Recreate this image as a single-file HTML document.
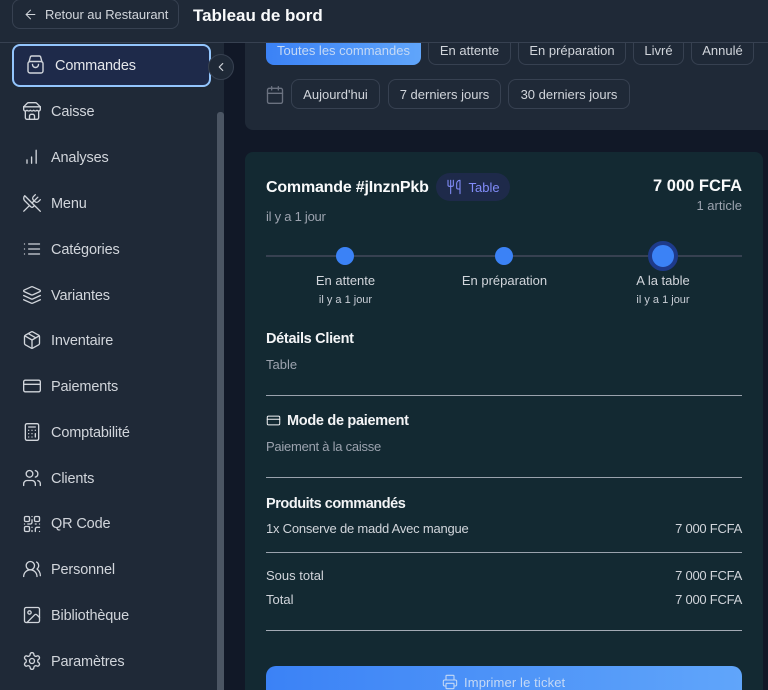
<!DOCTYPE html>
<html lang="fr">
<head>
<meta charset="utf-8">
<title>Tableau de bord</title>
<style>
html,body{margin:0;padding:0;width:768px;height:690px;overflow:hidden;background:#111827;font-family:"Liberation Sans",sans-serif}
#p{position:relative;width:768px;height:690px;overflow:hidden;background:#111827}
.a{position:absolute}
.t{position:absolute;white-space:nowrap;line-height:20px;height:20px}
.c{transform:translateX(-50%)}
.r{transform:translateX(-100%)}
svg.i{position:absolute;fill:none;stroke:currentColor;stroke-width:1.6;stroke-linecap:round;stroke-linejoin:round}
.n{font-size:14.5px;letter-spacing:-.15px;color:#d1d5db;left:51px}
.ic{color:#d1d5db;left:22px;width:20px;height:20px}
.chip{position:absolute;box-sizing:border-box;border:1px solid #374151;border-radius:8px;background:#1f2937;color:#d1d5db;font-size:13px;display:flex;align-items:center;justify-content:center;white-space:nowrap}
.hr{position:absolute;left:266px;width:476px;height:1px;background:#9aa2ad}
.h{font-size:14.5px;font-weight:bold;color:#f3f4f6}
.m{font-size:13px;color:#d1d5db}
.g{font-size:13px;color:#9ca3af}
.p{letter-spacing:-.25px}
</style>
</head>
<body>
<div id="p">
<!-- top filter card -->
<div class="a" style="left:245px;top:30px;width:523px;height:100px;background:#1f2937;border-radius:0 0 0 8px"></div>
<div class="chip" style="left:266px;top:30px;width:155px;height:35px;border:0;background:linear-gradient(90deg,#3b82f6,#60a5fa);color:#c5d9f5;align-items:flex-start"><span style="margin-top:13px;line-height:16px">Toutes les commandes</span></div>
<div class="chip" style="left:428px;top:30px;width:83px;height:35px;align-items:flex-start"><span style="margin-top:11.5px;line-height:16px">En attente</span></div>
<div class="chip" style="left:518px;top:30px;width:108px;height:35px;align-items:flex-start"><span style="margin-top:11.5px;line-height:16px">En préparation</span></div>
<div class="chip" style="left:633px;top:30px;width:51px;height:35px;align-items:flex-start"><span style="margin-top:11.5px;line-height:16px">Livré</span></div>
<div class="chip" style="left:691px;top:30px;width:63px;height:35px;align-items:flex-start"><span style="margin-top:11.5px;line-height:16px">Annulé</span></div>

<svg class="i" viewBox="0 0 24 24" style="left:265px;top:85px;width:20px;height:20px;color:#6b7280"><rect x="3" y="4" width="18" height="18" rx="2"/><path d="M16 2v4M8 2v4M3 10h18"/></svg>
<div class="chip" style="left:291px;top:79px;width:89px;height:30px;padding-top:1px">Aujourd'hui</div>
<div class="chip" style="left:388px;top:79px;width:113px;height:30px;padding-top:1px">7 derniers jours</div>
<div class="chip" style="left:508px;top:79px;width:122px;height:30px;padding-top:1px">30 derniers jours</div>

<!-- order card -->
<div class="a" style="left:245px;top:152px;width:518px;height:560px;background:#132932;border-radius:8px"></div>
<div class="t" style="left:266px;top:178px;font-size:16px;font-weight:bold;color:#f9fafb;letter-spacing:-.2px">Commande #jInznPkb</div>
<div class="a" style="left:436px;top:173px;width:74px;height:28px;border-radius:14px;background:#1e2a4a"></div>
<svg class="i" viewBox="0 0 24 24" style="left:446px;top:179px;width:16px;height:16px;color:#818cf8"><path d="M3 2v7c0 1.1.9 2 2 2h4a2 2 0 0 0 2-2V2"/><path d="M7 2v20"/><path d="M21 15V2a5 5 0 0 0-5 5v6c0 1.1.9 2 2 2h3Zm0 0v7"/></svg>
<div class="t" style="left:468.5px;top:177.5px;font-size:13px;color:#818cf8">Table</div>
<div class="t r" style="left:742px;top:175.5px;font-size:16.5px;font-weight:bold;color:#f9fafb">7 000 FCFA</div>
<div class="t r g" style="left:742px;top:196px">1 article</div>
<div class="t g" style="left:266px;top:207px;letter-spacing:-.25px">il y a 1 jour</div>

<!-- steps -->
<div class="a" style="left:266px;top:255px;width:476px;height:2px;background:#374151"></div>
<div class="a" style="left:336px;top:246.5px;width:18px;height:18px;border-radius:50%;background:#3b82f6"></div>
<div class="a" style="left:495px;top:246.5px;width:18px;height:18px;border-radius:50%;background:#3b82f6"></div>
<div class="a" style="left:648px;top:241px;width:22px;height:22px;border-radius:50%;background:#3b82f6;border:4px solid #1e3a8a"></div>
<div class="t c m" style="left:345.5px;top:270.5px">En attente</div>
<div class="t c" style="left:345.5px;top:290px;font-size:11px;color:#c9ced6">il y a 1 jour</div>
<div class="t c m" style="left:504.5px;top:270.5px">En préparation</div>
<div class="t c m" style="left:663px;top:270.5px">A la table</div>
<div class="t c" style="left:663px;top:290px;font-size:11px;color:#c9ced6">il y a 1 jour</div>

<div class="t h" style="left:266px;top:328.5px;letter-spacing:-.3px">Détails Client</div>
<div class="t g" style="left:266px;top:355px">Table</div>
<div class="hr" style="top:395px"></div>

<svg class="i" viewBox="0 0 24 24" style="left:266px;top:413px;width:15px;height:15px;color:#f3f4f6"><rect x="2" y="5" width="20" height="14" rx="2"/><path d="M2 10h20"/></svg>
<div class="t h" style="left:287px;top:411px;letter-spacing:-.3px">Mode de paiement</div>
<div class="t g" style="left:266px;top:437px;letter-spacing:-.25px">Paiement à la caisse</div>
<div class="hr" style="top:477px"></div>

<div class="t h" style="left:266px;top:493.5px;letter-spacing:-.45px">Produits commandés</div>
<div class="t m" style="left:266px;top:519px;letter-spacing:-.22px">1x Conserve de madd Avec mangue</div>
<div class="t r m p" style="left:742px;top:519px">7 000 FCFA</div>
<div class="hr" style="top:552px"></div>
<div class="t m" style="left:266px;top:565.5px">Sous total</div>
<div class="t r m p" style="left:742px;top:565.5px">7 000 FCFA</div>
<div class="t m" style="left:266px;top:590px">Total</div>
<div class="t r m p" style="left:742px;top:590px">7 000 FCFA</div>
<div class="hr" style="top:630px;background:#a3aab5"></div>

<div class="a" style="left:266px;top:666px;width:476px;height:40px;border-radius:10px;background:linear-gradient(90deg,#3b82f6,#60a5fa)"></div>
<svg class="i" viewBox="0 0 24 24" style="left:442px;top:674px;width:16px;height:16px;color:#c5d9f5"><path d="M6 18H4a2 2 0 0 1-2-2v-5a2 2 0 0 1 2-2h16a2 2 0 0 1 2 2v5a2 2 0 0 1-2 2h-2"/><path d="M6 9V3a1 1 0 0 1 1-1h10a1 1 0 0 1 1 1v6"/><rect x="6" y="14" width="12" height="8" rx="1"/></svg>
<div class="t" style="left:464px;top:672.5px;font-size:13px;color:#c5d9f5;letter-spacing:.13px">Imprimer le ticket</div>

<!-- sidebar -->
<div class="a" style="left:0;top:0;width:224px;height:690px;background:#1f2937"></div>
<div class="a" style="left:217px;top:112px;width:7px;height:578px;background:#4b5563;border-radius:3px 3px 0 0"></div>

<div class="a" style="left:11.5px;top:43.5px;width:195px;height:39px;border:2px solid #93c5fd;border-radius:8px;background:#1e2a4a"></div>
<svg class="i" viewBox="0 0 20 20" style="left:25px;top:54px;width:20px;height:20px;color:#d1d5db;stroke-width:1.4"><rect x="3" y="7.5" width="15" height="11.5" rx="2"/><path d="M4 8 5.3 3.2A1.5 1.5 0 0 1 6.8 2h7.4a1.5 1.5 0 0 1 1.5 1.2L17 8"/><path d="M7.5 10.5a3 3 0 0 0 6 0"/></svg>
<div class="t n" style="left:55px;top:56px;color:#e5e7eb">Commandes</div>

<svg class="i ic" viewBox="0 0 24 24" style="top:101px"><path d="m2 7 4.41-4.41A2 2 0 0 1 7.83 2h8.34a2 2 0 0 1 1.42.59L22 7"/><path d="M4 12v8a2 2 0 0 0 2 2h12a2 2 0 0 0 2-2v-8"/><path d="M15 22v-4a2 2 0 0 0-2-2h-2a2 2 0 0 0-2 2v4"/><path d="M2 7h20"/><path d="M22 7v3a2 2 0 0 1-2 2a2.7 2.7 0 0 1-1.59-.63.7.7 0 0 0-.82 0A2.7 2.7 0 0 1 16 12a2.7 2.7 0 0 1-1.59-.63.7.7 0 0 0-.82 0A2.7 2.7 0 0 1 12 12a2.7 2.7 0 0 1-1.59-.63.7.7 0 0 0-.82 0A2.7 2.7 0 0 1 8 12a2.7 2.7 0 0 1-1.59-.63.7.7 0 0 0-.82 0A2.7 2.7 0 0 1 4 12a2 2 0 0 1-2-2V7"/></svg>
<div class="t n" style="top:102px">Caisse</div>

<svg class="i ic" viewBox="0 0 24 24" style="top:147px"><path d="M6 19.5v-4M11.5 19.5V12M17 19.5V4"/></svg>
<div class="t n" style="top:148px">Analyses</div>

<svg class="i ic" viewBox="0 0 24 24" style="top:193px"><path d="m16 2-2.3 2.3a3 3 0 0 0 0 4.2l1.8 1.8a3 3 0 0 0 4.2 0L22 8"/><path d="M15 15 3.3 3.3a4.2 4.2 0 0 0 0 6l7.3 7.3c.7.7 2 .7 2.8 0L15 15Zm0 0 7 7"/><path d="m2.1 21.8 6.4-6.3"/><path d="m19 5-7 7"/></svg>
<div class="t n" style="top:194px">Menu</div>

<svg class="i ic" viewBox="0 0 24 24" style="top:239px"><path d="M8 6h13M8 12h13M8 18h13M3 6h.01M3 12h.01M3 18h.01"/></svg>
<div class="t n" style="top:240px">Catégories</div>

<svg class="i ic" viewBox="0 0 24 24" style="top:285px"><path d="M12.83 2.18a2 2 0 0 0-1.66 0L2.6 6.08a1 1 0 0 0 0 1.83l8.58 3.91a2 2 0 0 0 1.66 0l8.58-3.9a1 1 0 0 0 0-1.83Z"/><path d="m22 17.65-9.17 4.16a2 2 0 0 1-1.66 0L2 17.65"/><path d="m22 12.65-9.17 4.16a2 2 0 0 1-1.66 0L2 12.65"/></svg>
<div class="t n" style="top:286px">Variantes</div>

<svg class="i ic" viewBox="0 0 24 24" style="top:330px"><path d="M21 8a2 2 0 0 0-1-1.73l-7-4a2 2 0 0 0-2 0l-7 4A2 2 0 0 0 3 8v8a2 2 0 0 0 1 1.73l7 4a2 2 0 0 0 2 0l7-4A2 2 0 0 0 21 16Z"/><path d="m3.3 7 8.7 5 8.7-5"/><path d="M12 22V12"/><path d="m7.5 4.27 9 5.15"/></svg>
<div class="t n" style="top:331px">Inventaire</div>

<svg class="i ic" viewBox="0 0 24 24" style="top:376px"><rect x="2" y="5" width="20" height="14" rx="2"/><path d="M2 10h20"/></svg>
<div class="t n" style="top:377px">Paiements</div>

<svg class="i ic" viewBox="0 0 24 24" style="top:422px"><rect x="4" y="2" width="16" height="20" rx="2"/><path d="M8 6h8M16 14v4M16 10h.01M12 10h.01M8 10h.01M12 14h.01M8 14h.01M12 18h.01M8 18h.01"/></svg>
<div class="t n" style="top:423px">Comptabilité</div>

<svg class="i ic" viewBox="0 0 24 24" style="top:468px"><path d="M16 21v-2a4 4 0 0 0-4-4H6a4 4 0 0 0-4 4v2"/><circle cx="9" cy="7" r="4"/><path d="M22 21v-2a4 4 0 0 0-3-3.87"/><path d="M16 3.13a4 4 0 0 1 0 7.75"/></svg>
<div class="t n" style="top:469px">Clients</div>

<svg class="i ic" viewBox="0 0 24 24" style="top:513.5px"><rect x="3" y="3" width="6" height="6" rx="1.5"/><rect x="15" y="3" width="6" height="6" rx="1.5"/><rect x="3" y="15" width="6" height="6" rx="1.5"/><path d="M21 16h-3a2 2 0 0 0-2 2v3"/><path d="M21 21v.01"/><path d="M12 7v3a2 2 0 0 1-2 2H7"/><path d="M3 12h.01"/><path d="M12 3h.01"/><path d="M12 16v.01"/><path d="M16 12h1"/><path d="M21 12v.01"/><path d="M12 21v-1"/></svg>
<div class="t n" style="top:514px">QR Code</div>

<svg class="i ic" viewBox="0 0 24 24" style="top:559px"><path d="M18 21a8 8 0 0 0-16 0"/><circle cx="10" cy="8" r="5"/><path d="M22 20c0-3.37-2-6.5-4-8a5 5 0 0 0-.45-8.3"/></svg>
<div class="t n" style="top:560px">Personnel</div>

<svg class="i ic" viewBox="0 0 24 24" style="top:605px"><rect x="3" y="3" width="18" height="18" rx="2"/><circle cx="9" cy="9" r="2"/><path d="m21 15-3.086-3.086a2 2 0 0 0-2.828 0L6 21"/></svg>
<div class="t n" style="top:606px">Bibliothèque</div>

<svg class="i ic" viewBox="0 0 24 24" style="top:651px"><path d="M12.22 2h-.44a2 2 0 0 0-2 2v.18a2 2 0 0 1-1 1.73l-.43.25a2 2 0 0 1-2 0l-.15-.08a2 2 0 0 0-2.73.73l-.22.38a2 2 0 0 0 .73 2.73l.15.1a2 2 0 0 1 1 1.72v.51a2 2 0 0 1-1 1.74l-.15.09a2 2 0 0 0-.73 2.73l.22.38a2 2 0 0 0 2.73.73l.15-.08a2 2 0 0 1 2 0l.43.25a2 2 0 0 1 1 1.73V20a2 2 0 0 0 2 2h.44a2 2 0 0 0 2-2v-.18a2 2 0 0 1 1-1.73l.43-.25a2 2 0 0 1 2 0l.15.08a2 2 0 0 0 2.73-.73l.22-.39a2 2 0 0 0-.73-2.73l-.15-.08a2 2 0 0 1-1-1.74v-.5a2 2 0 0 1 1-1.74l.15-.09a2 2 0 0 0 .73-2.73l-.22-.38a2 2 0 0 0-2.73-.73l-.15.08a2 2 0 0 1-2 0l-.43-.25a2 2 0 0 1-1-1.73V4a2 2 0 0 0-2-2z"/><circle cx="12" cy="12" r="3"/></svg>
<div class="t n" style="top:652px">Paramètres</div>

<!-- collapse button -->
<div class="a" style="left:208px;top:54px;width:26px;height:26px;box-sizing:border-box;border-radius:50%;background:#1f2937;border:1px solid #374151"></div>
<svg class="i" viewBox="0 0 24 24" style="left:214px;top:60px;width:14px;height:14px;color:#d1d5db;stroke-width:2"><path d="m15 18-6-6 6-6"/></svg>

<!-- header -->
<div class="a" style="left:0;top:0;width:768px;height:42px;background:#1f2937;border-bottom:1px solid #374151"></div>
<div class="a" style="left:12px;top:-1px;width:167px;height:30px;box-sizing:border-box;border:1px solid #374151;border-radius:8px"></div>
<svg class="i" viewBox="0 0 24 24" style="left:23px;top:7px;width:15px;height:15px;color:#d1d5db"><path d="m12 19-7-7 7-7"/><path d="M19 12H5"/></svg>
<div class="t" style="left:45px;top:5px;font-size:13px;color:#d1d5db;letter-spacing:-.05px">Retour au Restaurant</div>
<div class="t" style="left:193px;top:5.5px;font-size:17px;font-weight:bold;color:#f9fafb;letter-spacing:-.02px">Tableau de bord</div>
</div>
</body>
</html>
